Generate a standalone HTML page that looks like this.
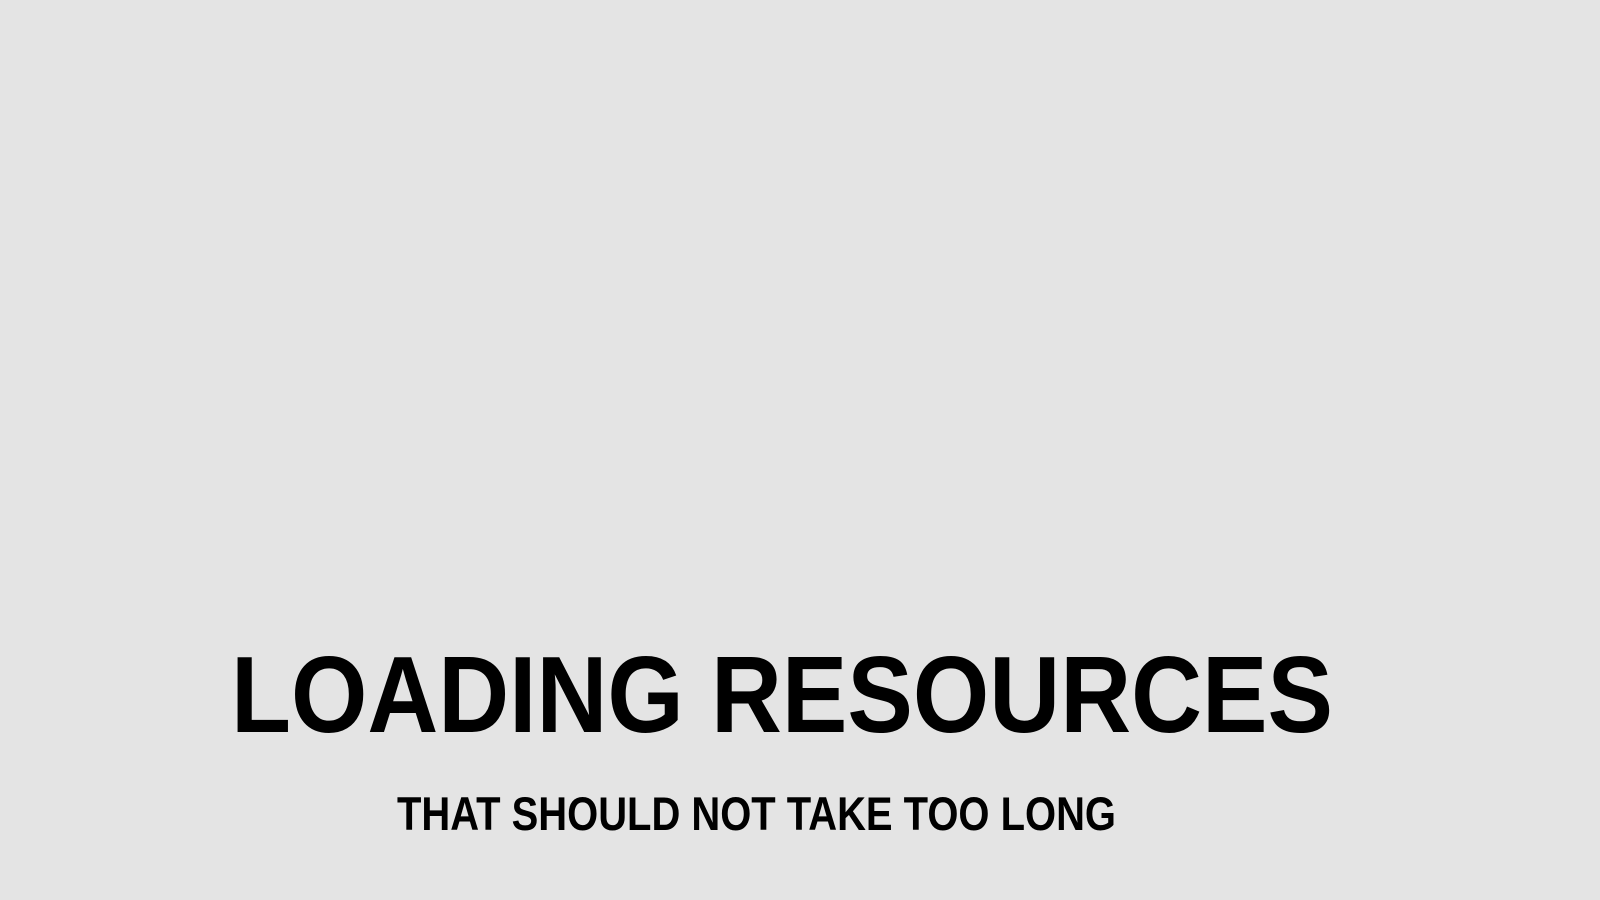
<!DOCTYPE html>
<html><head><meta charset="utf-8"><style>
html,body{margin:0;padding:0;background:#e4e4e4;width:1600px;height:900px;overflow:hidden}
svg{display:block}
</style></head><body>
<svg width="1600" height="900" xmlns="http://www.w3.org/2000/svg">
<rect width="1600" height="900" fill="#e4e4e4"/>
<text x="231" y="732" font-family="Liberation Sans, sans-serif" font-weight="bold" font-size="109" textLength="1102" lengthAdjust="spacingAndGlyphs" fill="#000">LOADING RESOURCES</text>
<text x="397" y="830" font-family="Liberation Sans, sans-serif" font-weight="bold" font-size="47" textLength="719" lengthAdjust="spacingAndGlyphs" fill="#000">THAT SHOULD NOT TAKE TOO LONG</text>
</svg>
</body></html>
